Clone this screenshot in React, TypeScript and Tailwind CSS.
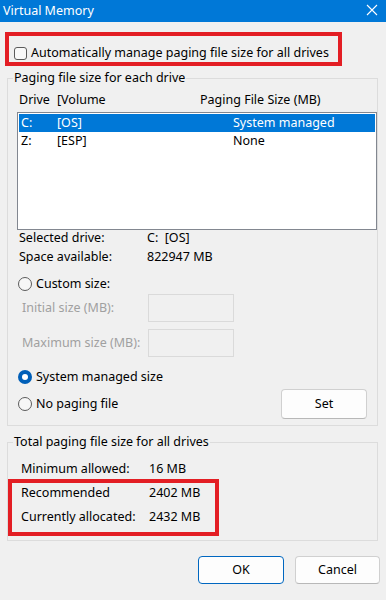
import React from "react";

const font = { fontFamily: '"Noto Sans", "Liberation Sans", sans-serif' };

function Radio({ checked }: { checked?: boolean }) {
  if (checked) {
    return (
      <span className="w-[14px] h-[14px] rounded-full bg-[#005fb8] flex items-center justify-center shrink-0">
        <span className="w-[6px] h-[6px] rounded-full bg-white" />
      </span>
    );
  }
  return <span className="w-[14px] h-[14px] rounded-full border border-[#5b5b5b] bg-[#f7f7f7] shrink-0" />;
}

export default function App() {
  return (
    <div style={font} className="w-[386px] h-[600px] bg-[#f0f0f0] text-[12.5px] text-black flex flex-col overflow-hidden leading-none">
      {/* title bar */}
      <div className="h-[22px] bg-[#0078d7] flex items-center justify-between pl-[3px] pr-[8px] shrink-0">
        <span className="text-white text-[12.5px]">Virtual Memory</span>
        <svg width="12" height="12" viewBox="0 0 12 12" className="mb-[3px]">
          <path d="M1 1 L11 11 M11 1 L1 11" stroke="white" strokeWidth="1.1" />
        </svg>
      </div>

      {/* red box 1 */}
      <div className="mt-[10px] ml-[5px] w-[337px] h-[34px] border-4 border-[#e31e24] pt-[8px] pl-[5px] flex items-center gap-[4px] shrink-0">
        <span className="w-[13px] h-[13px] rounded-[3px] border border-[#5b5b5b] bg-[#f9f9f9] shrink-0" />
        <span className="whitespace-nowrap">Automatically manage paging file size for all drives</span>
      </div>

      {/* group 1 */}
      <fieldset className="mt-[4px] ml-[7px] w-[371px] border border-[#dcdcdc] pb-[6px] shrink-0">
        <legend className="ml-[5px] px-[1px] h-[16px] leading-[16px]">Paging file size for each drive</legend>
        <div className="mt-[6px] h-[16px] flex items-center pl-[11px]">
          <span className="w-[38px]">Drive</span>
          <span className="w-[143px]">[Volume</span>
          <span>Paging File Size (MB)</span>
        </div>
        <div className="mt-[4px] ml-[9px] w-[360px] h-[118px] border border-[#828790] bg-white p-px">
          <div className="h-[18px] bg-[#0078d7] text-white flex items-center pl-[2px]">
            <span className="w-[36px]">C:</span>
            <span className="w-[176px]">[OS]</span>
            <span>System managed</span>
          </div>
          <div className="h-[18px] flex items-center pl-[2px]">
            <span className="w-[36px]">Z:</span>
            <span className="w-[176px]">[ESP]</span>
            <span>None</span>
          </div>
        </div>
        <div className="h-[16px] flex items-center pl-[11px]">
          <span className="w-[128px]">Selected drive:</span>
          <span>C:&nbsp;&nbsp;[OS]</span>
        </div>
        <div className="mt-[3px] h-[16px] flex items-center pl-[11px]">
          <span className="w-[128px]">Space available:</span>
          <span>822947 MB</span>
        </div>
        <div className="mt-[10px] h-[18px] flex items-center pl-[10px] gap-[4px]">
          <Radio />
          <span>Custom size:</span>
        </div>
        <div className="mt-[1px] h-[28px] flex items-center pl-[14px]">
          <span className="w-[126px] text-[#a0a0a0]">Initial size (MB):</span>
          <span className="w-[86px] h-[28px] border border-[#dadada] bg-[#f0f0f0]" />
        </div>
        <div className="mt-[7px] h-[28px] flex items-center pl-[14px]">
          <span className="w-[126px] text-[#a0a0a0] whitespace-nowrap">Maximum size (MB):</span>
          <span className="w-[86px] h-[28px] border border-[#dadada] bg-[#f0f0f0]" />
        </div>
        <div className="mt-[11px] h-[18px] flex items-center pl-[10px] gap-[4px]">
          <Radio checked />
          <span>System managed size</span>
        </div>
        <div className="mt-[3px] h-[30px] flex items-center pl-[10px] pr-[10px]">
          <Radio />
          <span className="ml-[4px]">No paging file</span>
          <button className="ml-auto w-[86px] h-[30px] rounded-[4px] border border-[#d0d0d0] border-b-[#b8b8b8] bg-[#fdfdfd] text-[12.5px]">
            Set
          </button>
        </div>
      </fieldset>

      {/* group 2 */}
      <fieldset className="mt-[8px] ml-[7px] w-[371px] border border-[#dcdcdc] pb-[4px] shrink-0">
        <legend className="ml-[5px] px-[1px] h-[16px] leading-[16px]">Total paging file size for all drives</legend>
        <div className="mt-[10px] h-[18px] flex items-center pl-[13px]">
          <span className="w-[128px]">Minimum allowed:</span>
          <span>16 MB</span>
        </div>
        <div className="mt-[1px] w-[211px] border-4 border-[#e31e24] pl-[9px] pb-[5px] flex flex-col gap-[4px]">
          <div className="h-[20px] flex items-center">
            <span className="w-[128px]">Recommended</span>
            <span>2402 MB</span>
          </div>
          <div className="h-[20px] flex items-center">
            <span className="w-[128px] whitespace-nowrap">Currently allocated:</span>
            <span>2432 MB</span>
          </div>
        </div>
      </fieldset>

      {/* buttons */}
      <div className="mt-[15px] flex justify-end gap-[11px] pr-[6px] shrink-0">
        <button className="w-[86px] h-[28px] rounded-[4px] border border-[#0067c0] bg-[#fdfdfd] text-[12.5px]">OK</button>
        <button className="w-[85px] h-[28px] rounded-[4px] border border-[#d0d0d0] border-b-[#b8b8b8] bg-[#fdfdfd] text-[12.5px]">Cancel</button>
      </div>
    </div>
  );
}
